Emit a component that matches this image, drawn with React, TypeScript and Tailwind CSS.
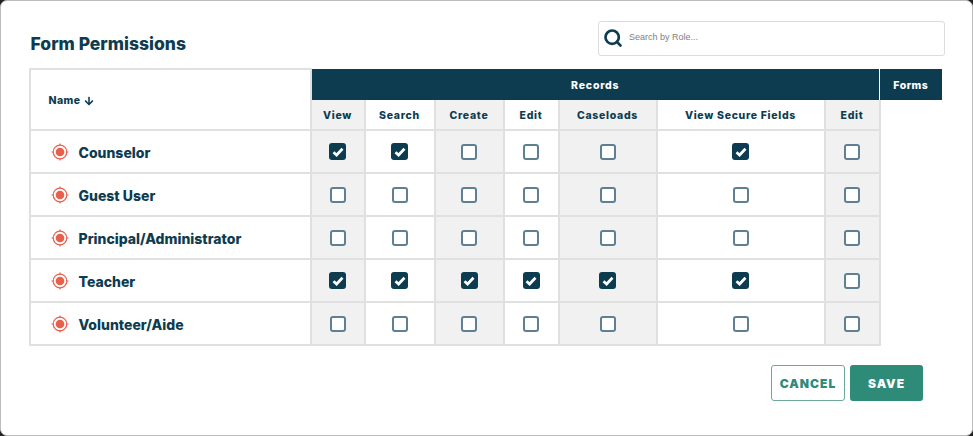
import { FaArrowDown } from "react-icons/fa"
import { Search } from "lucide-react"

const roles = [
  { name: "Counselor", checks: [true, true, false, false, false, true, false] },
  { name: "Guest User", checks: [false, false, false, false, false, false, false] },
  { name: "Principal/Administrator", checks: [false, false, false, false, false, false, false] },
  { name: "Teacher", checks: [true, true, true, true, true, true, false] },
  { name: "Volunteer/Aide", checks: [false, false, false, false, false, false, false] },
]

const columns = [
  { label: "View", shaded: true },
  { label: "Search", shaded: false },
  { label: "Create", shaded: true },
  { label: "Edit", shaded: false },
  { label: "Caseloads", shaded: true },
  { label: "View Secure Fields", shaded: false },
  { label: "Edit", shaded: true },
]

function TargetIcon() {
  return (
    <svg width="18" height="18" viewBox="0 0 18 18" className="shrink-0">
      <circle cx="9" cy="9" r="6.8" fill="none" stroke="#e8604c" strokeWidth="1.2" />
      <circle cx="9" cy="9" r="4.3" fill="#e8604c" />
      <path d="M9 0.5V2.5M9 15.5V17.5M0.5 9H2.5M15.5 9H17.5" stroke="#e8604c" strokeWidth="1.2" />
    </svg>
  )
}

function Checkbox({ checked }: { checked: boolean }) {
  if (checked) {
    return (
      <span className="mb-[2px] inline-flex h-[17px] w-[17px] items-center justify-center rounded-[3px] bg-[#0d3c50] align-middle">
        <svg width="12" height="10" viewBox="0 0 12 10">
          <path d="M1.5 5.2L4.6 8L10.5 1.8" fill="none" stroke="#fff" strokeWidth="2.7" />
        </svg>
      </span>
    )
  }
  return <span className="mb-[2px] inline-block h-[16px] w-[16px] rounded-[3px] border-2 border-[#5f8092] bg-white align-middle" />
}

export default function App() {
  return (
    <div className="h-[436px] w-[973px] bg-[#222] font-['Inter',sans-serif] text-[#0d3c50]">
      <div className="flex h-full flex-col rounded-[7px] border-[1.5px] border-[#bdbdbd] bg-white pl-[27.5px] pt-[19.5px]">
        <div className="flex h-[47px] items-start justify-between pr-[27px]">
          <h1 className="pl-[2px] pt-[12px] text-[17.5px] leading-[22px] font-extrabold">Form Permissions</h1>
          <div className="flex h-[35px] w-[347px] items-center gap-[6px] rounded-[3px] border border-[#dcdcdc] pl-[4px]">
            <Search size={20} strokeWidth={3.2} className="text-[#0d3c50]" />
            <span className="font-['Liberation_Sans',sans-serif] text-[9px] text-[#808080]">Search by Role...</span>
          </div>
        </div>

        <table className="w-[912px] table-fixed border-collapse">
          <colgroup>
            <col className="w-[281px]" />
            <col className="w-[54px]" />
            <col className="w-[70px]" />
            <col className="w-[69px]" />
            <col className="w-[55px]" />
            <col className="w-[98px]" />
            <col className="w-[168px]" />
            <col className="w-[55px]" />
            <col className="w-[62px]" />
          </colgroup>
          <thead>
            <tr className="h-[31px]">
              <th rowSpan={2} className="border-2 border-[#e0e0e0] pl-[18px] pt-[3px] text-left text-[10.5px] font-extrabold tracking-[0.4px]">
                <span className="inline-flex items-center gap-[4px]">
                  Name <FaArrowDown size={10} />
                </span>
              </th>
              <th colSpan={7} className="bg-[#0d3c50] pt-[3px] text-center text-[10.5px] font-extrabold tracking-[0.8px] text-white">
                Records
              </th>
              <th className="border-l border-white bg-[#0d3c50] pt-[3px] text-center text-[10.5px] font-extrabold tracking-[0.5px] text-white">
                Forms
              </th>
            </tr>
            <tr className="h-[30px]">
              {columns.map((col, index) => (
                <th
                  key={index}
                  className={`border-2 border-t-0 border-[#e0e0e0] pt-[3px] text-center text-[10.5px] font-extrabold tracking-[0.7px] ${col.shaded ? "bg-[#f1f1f1]" : "bg-white"}`}
                >
                  {col.label}
                </th>
              ))}
              <th />
            </tr>
          </thead>
          <tbody>
            {roles.map((role) => (
              <tr key={role.name} className="h-[43px]">
                <td className="border-2 border-[#e0e0e0] pl-[20px]">
                  <div className="flex items-center gap-[10px] pt-[2px] text-[14px] font-extrabold">
                    <TargetIcon />
                    <span className="pt-[1px]">{role.name}</span>
                  </div>
                </td>
                {role.checks.map((checked, index) => (
                  <td
                    key={index}
                    className={`border-2 border-[#e0e0e0] text-center ${columns[index].shaded ? "bg-[#f1f1f1]" : "bg-white"}`}
                  >
                    <Checkbox checked={checked} />
                  </td>
                ))}
                <td />
              </tr>
            ))}
          </tbody>
        </table>

        <div className="flex justify-end gap-[5px] pr-[49px] pt-[19px]">
          <button className="h-[36px] w-[74px] rounded-[3px] border-[1.5px] border-[#6fa89b] bg-white pt-[3px] text-[12px] font-black tracking-[1px] text-[#2e8b78]">
            CANCEL
          </button>
          <button className="h-[36px] w-[73px] rounded-[3px] bg-[#2e8b78] pt-[3px] text-[12px] font-black tracking-[1px] text-white">
            SAVE
          </button>
        </div>
      </div>
    </div>
  )
}
